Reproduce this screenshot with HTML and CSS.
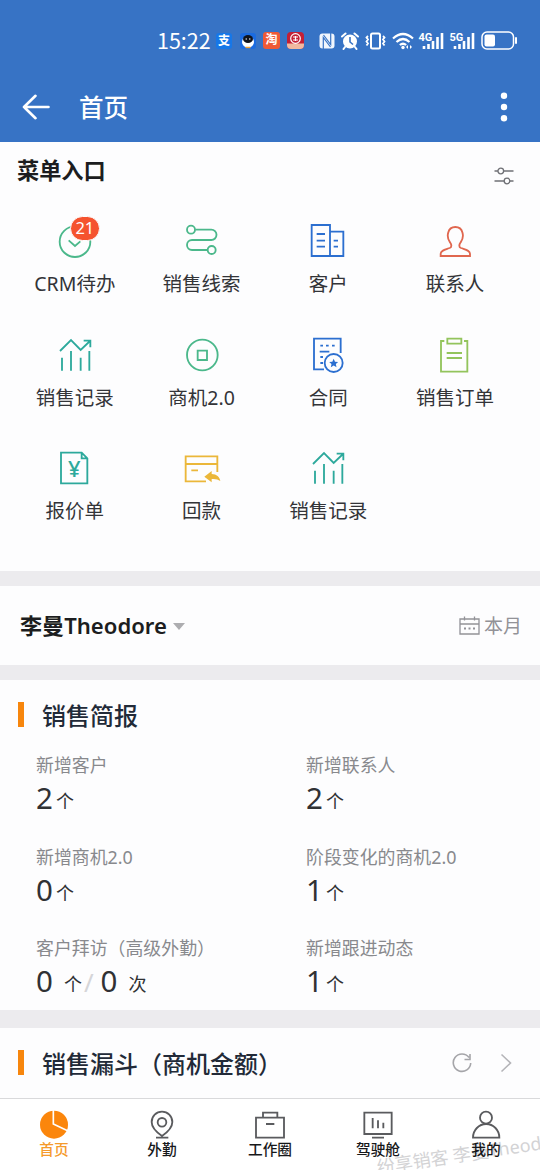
FILE: index.html
```html
<!DOCTYPE html>
<html lang="zh-CN">
<head>
<meta charset="utf-8">
<title>首页</title>
<link rel="stylesheet" href="styles.css">
</head>
<body>
<div class="app">
  <header class="header">
    <div class="status">
      <span class="time">15:22</span>
      <span class="app-ico alipay">支</span>
      <svg class="app-svg" viewBox="0 0 16 16"><rect width="16" height="16" rx="3" fill="#1b6be0"/><ellipse cx="8" cy="9" rx="6" ry="5.500" fill="#fff"/><ellipse cx="8" cy="6" rx="5" ry="4" fill="#10131c"/><circle cx="6.200" cy="6" r=".7" fill="#fff"/><circle cx="9.800" cy="6" r=".7" fill="#fff"/><path d="M5.500 14.500h5" stroke="#f0a030" stroke-width="1.500"/></svg>
      <span class="app-ico taobao">淘</span>
      <svg class="app-svg bank" viewBox="0 0 17 17"><rect width="17" height="17" rx="4" fill="#c41f35"/><path d="M0 11.500h17V13a4 4 0 0 1-4 4H4a4 4 0 0 1-4-4z" fill="#f1b9a0"/><circle cx="8.500" cy="6.500" r="4.800" fill="none" stroke="#fff" stroke-width="1.200"/><path d="M6 5h5M6 8h5M8.500 4v5" stroke="#fff" stroke-width="1.200"/></svg>
      <svg class="nfc" viewBox="0 0 16 16"><rect x=".5" y=".5" width="15" height="15" rx="3" fill="#f1f6fd"/><path d="M4.300 16V4.500L11.500 14M11.700 0v11.500L4.500 2" fill="none" stroke="#3773c5" stroke-width="1.200"/></svg>
      <svg class="alarm" viewBox="0 0 18 18"><circle cx="9" cy="9.500" r="7" fill="#fff"/><path d="M1 4.500 4.500 1.500M17 4.500l-3.500-3M4 15l-1.500 2M14 15l1.500 2" stroke="#fff" stroke-width="2" stroke-linecap="round"/><path d="M9 5v5l3 2.500" fill="none" stroke="#3773c5" stroke-width="1.600"/></svg>
      <svg class="vibrate" viewBox="0 0 21 18"><rect x="6" y="1.500" width="9" height="15" rx="1.500" fill="none" stroke="#fff" stroke-width="2"/><path d="M3 4 1.500 5.500 3 7.500 1.500 9.500 3 11.500 1.500 13.500M18 4l1.500 1.500L18 7.500l1.500 2-1.500 2 1.500 2" fill="none" stroke="#fff" stroke-width="1.800"/></svg>
      <svg class="wifi" viewBox="0 0 22 18"><path d="M1 6.500q10-9 20 0M4.500 10q6.500-6 13 0M7.800 13q3.200-2.500 6.400 0" fill="none" stroke="#fff" stroke-width="2.200"/><circle cx="11" cy="15.500" r="1.700" fill="#fff"/><path d="m14 15 2-2v4zm6 0-2-2v4z" fill="#fff"/></svg>
      <svg class="signal" viewBox="0 0 26 18"><path d="M5 17v-3M9.500 17v-5M14 17V9M18.500 17V5M23 17V1" stroke="#fff" stroke-width="2.600"/><text x="-.5" y="9">4G</text></svg>
      <svg class="signal" viewBox="0 0 26 18"><path d="M5 17v-3M9.500 17v-5M14 17V9M18.500 17V5M23 17V1" stroke="#fff" stroke-width="2.600"/><text x="-.5" y="9">5G</text></svg>
      <svg class="battery" viewBox="0 0 37 20"><rect x="1" y="1" width="31.500" height="17" rx="5" fill="none" stroke="#fff" stroke-width="1.500"/><rect x="3.500" y="3.500" width="10.500" height="12" rx="2" fill="#fff"/><path d="M35 7v5" stroke="#fff" stroke-width="2" stroke-linecap="round"/></svg>
    </div>
    <div class="titlebar">
      <svg class="back" viewBox="0 0 28 26"><path d="M26.500 13H2M13.500 1.800 2 13l11.500 11.200" fill="none" stroke="#fff" stroke-width="2.600" stroke-linecap="round" stroke-linejoin="round"/></svg>
      <h1>首页</h1>
      <svg class="more" viewBox="0 0 8 30"><g fill="#fff"><circle cx="4" cy="3.700" r="3.200"/><circle cx="4" cy="15" r="3.200"/><circle cx="4" cy="26.300" r="3.200"/></g></svg>
    </div>
  </header>

  <section class="menu">
    <div class="menu-head">
      <h2>菜单入口</h2>
      <svg class="filter" viewBox="0 0 20 18"><g fill="none" stroke="#6f7075" stroke-width="1.300"><path d="M.5 4H4M9.500 4H19.500M.5 14H10M16 14h3.500"/><circle cx="6.800" cy="4" r="2.800"/><circle cx="13" cy="14" r="2.800"/></g></svg>
    </div>
    <div class="grid">
      <div class="entry">
        <div class="ico-wrap"><svg class="ico green" viewBox="0 0 120 120"><circle cx="60" cy="62" r="46"/><path d="m41 58 19 17 16-14"/></svg><span class="badge">21</span></div>
        <span>CRM待办</span>
      </div>
      <div class="entry">
        <svg class="ico green" viewBox="0 0 120 120"><circle cx="27" cy="26" r="12"/><path d="M40 26H88a15.500 15.500 0 0 1 0 31H30a15 15 0 0 0 0 30H76"/><circle cx="89" cy="87" r="12"/></svg>
        <span>销售线索</span>
      </div>
      <div class="entry">
        <svg class="ico blue" viewBox="0 0 120 120"><path d="M11 12h55v93H11zM66 32h40v73H66zM26 39h25M26 59h25M26 77h25M77 59h13M77 77h13"/></svg>
        <span>客户</span>
      </div>
      <div class="entry">
        <svg class="ico red" viewBox="0 0 120 120"><path d="M17 105v-7c0-10 13-12 27-17 7-3 6-10 1-17C33 48 37 18 61 18s28 30 16 46c-5 7-6 14 1 17 14 5 27 7 27 17v7z"/></svg>
        <span>联系人</span>
      </div>
      <div class="entry">
        <svg class="ico teal" viewBox="0 0 120 120"><path d="m15 48 33-33 29 30 28-27M86 17h20v20M21 68v39M48 48v59M77 68v39M103 48v59"/></svg>
        <span>销售记录</span>
      </div>
      <div class="entry">
        <svg class="ico green" viewBox="0 0 120 120"><circle cx="61" cy="60" r="46"/><path d="M47 47h28v28H47z"/></svg>
        <span>商机2.0</span>
      </div>
      <div class="entry">
        <svg class="ico blue" viewBox="0 0 120 120"><path d="M48 103H18V11h80v43M37 32h8M54 32h8M72 32h8M35 50h29M37 66h8M37 84h8"/><circle cx="77" cy="84" r="27"/><path class="solid-blue" d="m77 71 4 9 9.500.8-7 6.500 2 9.200-8.500-5-8.500 5 2-9.200-7-6.500 9.500-.8z"/></svg>
        <span>合同</span>
      </div>
      <div class="entry">
        <svg class="ico lime" viewBox="0 0 120 120"><path d="M28 18H18v92h79V18H87M37 11h42v15H37zM35 54h46M35 69h46"/></svg>
        <span>销售订单</span>
      </div>
      <div class="entry">
        <svg class="ico teal" viewBox="0 0 120 120"><path d="M18 14h62l17 17v75H18zM80 14v17h17"/><text x="58" y="86" text-anchor="middle">¥</text></svg>
        <span>报价单</span>
      </div>
      <div class="entry">
        <svg class="ico gold" viewBox="0 0 120 120"><path d="M72 100H11V25h95v47M11 48h95M28 67h20"/><path class="solid-gold" d="m67 86 22-17v9c15 0 24 9 26 21-7-5-15-7-26-6v10z"/></svg>
        <span>回款</span>
      </div>
      <div class="entry">
        <svg class="ico teal" viewBox="0 0 120 120"><path d="m15 48 33-33 29 30 28-27M86 17h20v20M21 68v39M48 48v59M77 68v39M103 48v59"/></svg>
        <span>销售记录</span>
      </div>
    </div>
  </section>

  <section class="owner">
    <span class="name">李曼Theodore</span>
    <span class="caret"></span>
    <svg class="calendar" viewBox="0 0 21 19"><g fill="none" stroke="#929297" stroke-width="1.300"><path d="M1 3h19v15H1zM1 8h19M5.500.5v4M15.500.5v4"/><path d="M5 12.500h2M9.500 12.500h2M14 12.500h2" stroke-width="1.800"/></g></svg>
    <span class="period">本月</span>
  </section>

  <section class="brief">
    <h3>销售简报</h3>
    <div class="stats">
      <div class="stat"><p>新增客户</p><div class="val"><b>2</b><i>个</i></div></div>
      <div class="stat"><p>新增联系人</p><div class="val"><b>2</b><i>个</i></div></div>
      <div class="stat"><p>新增商机2.0</p><div class="val"><b>0</b><i>个</i></div></div>
      <div class="stat"><p>阶段变化的商机2.0</p><div class="val"><b>1</b><i>个</i></div></div>
      <div class="stat"><p>客户拜访（高级外勤）</p><div class="val double"><b>0</b><i>个</i><em>/</em><b>0</b><i>次</i></div></div>
      <div class="stat"><p>新增跟进动态</p><div class="val"><b>1</b><i>个</i></div></div>
    </div>
  </section>

  <section class="funnel">
    <h3>销售漏斗（商机金额）</h3>
    <svg class="refresh" viewBox="0 0 20 20"><path d="M17 4.500A8.700 8.700 0 1 0 18.700 10M18 1v5.500h-5.500" fill="none" stroke="#a5a5a9" stroke-width="1.600"/></svg>
    <svg class="chevron" viewBox="0 0 12 20"><path d="m1.500 1.500 9 8.500-9 8.500" fill="none" stroke="#b4b4b8" stroke-width="1.600"/></svg>
  </section>

  <nav class="tabs">
    <div class="watermark">纷享销客 李曼Theodore</div>
    <div class="tab active"><svg viewBox="0 0 108 108"><circle cx="54" cy="53" r="42" fill="#fb860c"/><path d="M52 8v43l46 22" fill="none" stroke="#fff" stroke-width="5"/></svg><span>首页</span></div>
    <div class="tab"><svg class="line" viewBox="0 0 108 108"><circle cx="54" cy="46" r="13"/><path d="M54 87C38 76 23 63 23 45a31 31 0 0 1 62 0c0 18-15 31-31 42zM36 92h37"/></svg><span>外勤</span></div>
    <div class="tab"><svg class="line" viewBox="0 0 108 108"><path d="M12 32h84v60H12zM33 32V17h43v15M42 51h25"/></svg><span>工作圈</span></div>
    <div class="tab"><svg class="line" viewBox="0 0 108 108"><path d="M13 17h82v64H13zM38 33v31M54 40v24M70 47v17M36 92h36"/></svg><span>驾驶舱</span></div>
    <div class="tab"><svg class="line" viewBox="0 0 108 108"><circle cx="54" cy="32" r="18"/><path d="M15 92a39.500 41 0 0 1 79 0z"/></svg><span>我的</span></div>
  </nav>
</div>
</body>
</html>
```

FILE: styles.css
```css
* { box-sizing: border-box; }
body, h1, h2, h3, p { margin: 0; }
b, i, em { font-weight: inherit; font-style: normal; }
svg { display: block; flex: none; }

body {
  background: #ecebee;
  color: #333438;
  font-family: "Noto Sans", "Noto Sans CJK SC", sans-serif;
}

.app {
  width: 540px;
  height: 1170px;
  display: flex;
  flex-direction: column;
  overflow: hidden;
}
section { background: #fdfdfe; flex: none; }

/* Header */
.header { height: 142px; background: #3773c5; color: #fff; flex: none; }
.status { height: 70px; padding: 11px 0 0 157px; display: flex; align-items: center; }
.time { width: 59px; margin-top: -1px; font: 400 21.500px/30px "Noto Sans CJK SC", sans-serif; white-space: nowrap; }
.app-ico { width: 16px; height: 16px; border-radius: 3px; font-size: 12px; line-height: 16px; text-align: center; font-weight: 700; }
.alipay { background: #1677e8; }
.taobao { background: #ef5a36; margin-left: 7px; width: 17px; height: 17px; }
.app-svg { width: 16px; height: 16px; margin-left: 8px; }
.bank { width: 17px; height: 17px; margin-left: 7px; }
.nfc { width: 16px; height: 16px; margin-left: 15px; }
.alarm { width: 18px; height: 18px; margin-left: 6px; }
.vibrate { width: 21px; height: 18px; margin-left: 6px; }
.wifi { width: 22px; height: 18px; margin-left: 6px; }
.signal { width: 26px; height: 18px; margin-left: 5px; overflow: visible; }
.signal text { font: 700 11px Roboto, sans-serif; fill: #fff; stroke: #3773c5; stroke-width: 2px; paint-order: stroke; }
.battery { width: 37px; height: 20px; margin-left: 5px; }

.titlebar { height: 72px; display: flex; align-items: center; padding: 2px 32px 0 22px; }
.back { width: 28px; height: 26px; }
.titlebar h1 { margin: 1px 0 0 29px; font-size: 24.500px; line-height: 36px; font-weight: 500; }
.more { width: 8px; height: 30px; margin-left: auto; }

/* Menu */
.menu { height: 429px; margin-bottom: 15px; }
.menu-head { height: 68px; padding: 11px 26px 0 17px; display: flex; justify-content: space-between; align-items: flex-start; }
.menu-head h2 { font-size: 22.200px; line-height: 36px; font-weight: 700; color: #1c1d20; }
.filter { width: 20px; height: 18px; margin-top: 14px; }
.grid { display: grid; grid-template-columns: repeat(4, 126.700px); grid-auto-rows: 113.700px; padding-left: 11.500px; }
.entry { display: flex; flex-direction: column; align-items: center; padding-top: 11px; font-size: 19.500px; line-height: 28px; }
.entry > span { margin-top: 9px; white-space: nowrap; }
.ico { width: 40px; height: 40px; fill: none; stroke-width: 5.500; }
.ico-wrap { position: relative; }
.badge {
  position: absolute;
  left: 15px;
  top: -5px;
  width: 30px;
  height: 25px;
  border: 1px solid #fdfdfe;
  border-radius: 13px;
  background: #f5532f;
  color: #fff;
  font-size: 16.500px;
  line-height: 22px;
  text-align: center;
}
.green { stroke: #4bb88b; }
.blue { stroke: #2c6fd0; }
.red { stroke: #e0674f; }
.teal { stroke: #2da99c; }
.lime { stroke: #93c45c; }
.gold { stroke: #ebb73a; }
.solid-blue { fill: #2c6fd0; stroke: none; }
.solid-gold { fill: #ebb73a; stroke: none; }
.ico text { font-size: 66px; font-weight: 500; fill: #2da99c; stroke: none; }

/* Owner row */
.owner { height: 79px; margin-bottom: 15px; padding: 0 18px 0 20px; display: flex; align-items: center; }
.name { margin-top: -1px; font-size: 22.100px; line-height: 32px; font-weight: 600; color: #1c1d20; }
.caret { margin-left: 6px; margin-top: 1px; border: 6.500px solid transparent; border-top: 7px solid #adadb0; border-bottom: 0; }
.calendar { width: 21px; height: 19px; margin-left: auto; }
.period { margin-left: 4px; font-size: 19px; line-height: 28px; color: #929297; }

/* Brief */
h3 { display: flex; align-items: center; font-size: 24px; line-height: 36px; font-weight: 500; color: #222a38; white-space: nowrap; }
h3::before { content: ""; width: 6px; height: 25px; margin: -3px 18px 0 0; background: #f7860d; }
.brief { height: 330px; margin-bottom: 18px; padding: 18px 0 0 18px; }
.stats { display: grid; grid-template-columns: 270px 1fr; grid-auto-rows: 91.500px; padding: 18px 0 0 18px; }
.stat p { font-size: 17.900px; line-height: 26px; color: #88898d; white-space: nowrap; }
.val { height: 40px; display: flex; align-items: flex-end; color: #303134; }
.val b { font-size: 29.500px; line-height: 40px; }
.val i { font-size: 18px; line-height: 34px; margin-left: 3px; }
.val em { font-size: 26px; line-height: 38px; color: #d5d5d8; }
.double i { margin-left: 11px; }
.double em { margin: 0 7px 0 2px; }

/* Funnel */
.funnel { height: 70px; padding: 0 28px 0 18px; display: flex; align-items: center; }
.funnel h3 { margin-top: 2px; }
.refresh { width: 20px; height: 20px; margin-left: auto; }
.chevron { width: 12px; height: 20px; margin-left: 28px; }

/* Tab bar */
.tabs { position: relative; flex: 1; display: flex; border-top: 1px solid #d9d9db; background: #fff; overflow: hidden; }
.tab { position: relative; width: 108px; padding-top: 8px; display: flex; flex-direction: column; align-items: center; font-size: 14.700px; line-height: 20px; font-weight: 500; color: #17181a; }
.tab svg { width: 36px; height: 36px; }
.tab span { margin-top: -4px; }
.line { fill: none; stroke: #5a5b5e; stroke-width: 5.500; }
.active { color: #f59a2c; }
.watermark { position: absolute; left: 377px; top: 56px; transform: rotate(-8.500deg); transform-origin: 0 50%; font-size: 18px; line-height: 24px; color: #d3d3d5; white-space: nowrap; }
```
